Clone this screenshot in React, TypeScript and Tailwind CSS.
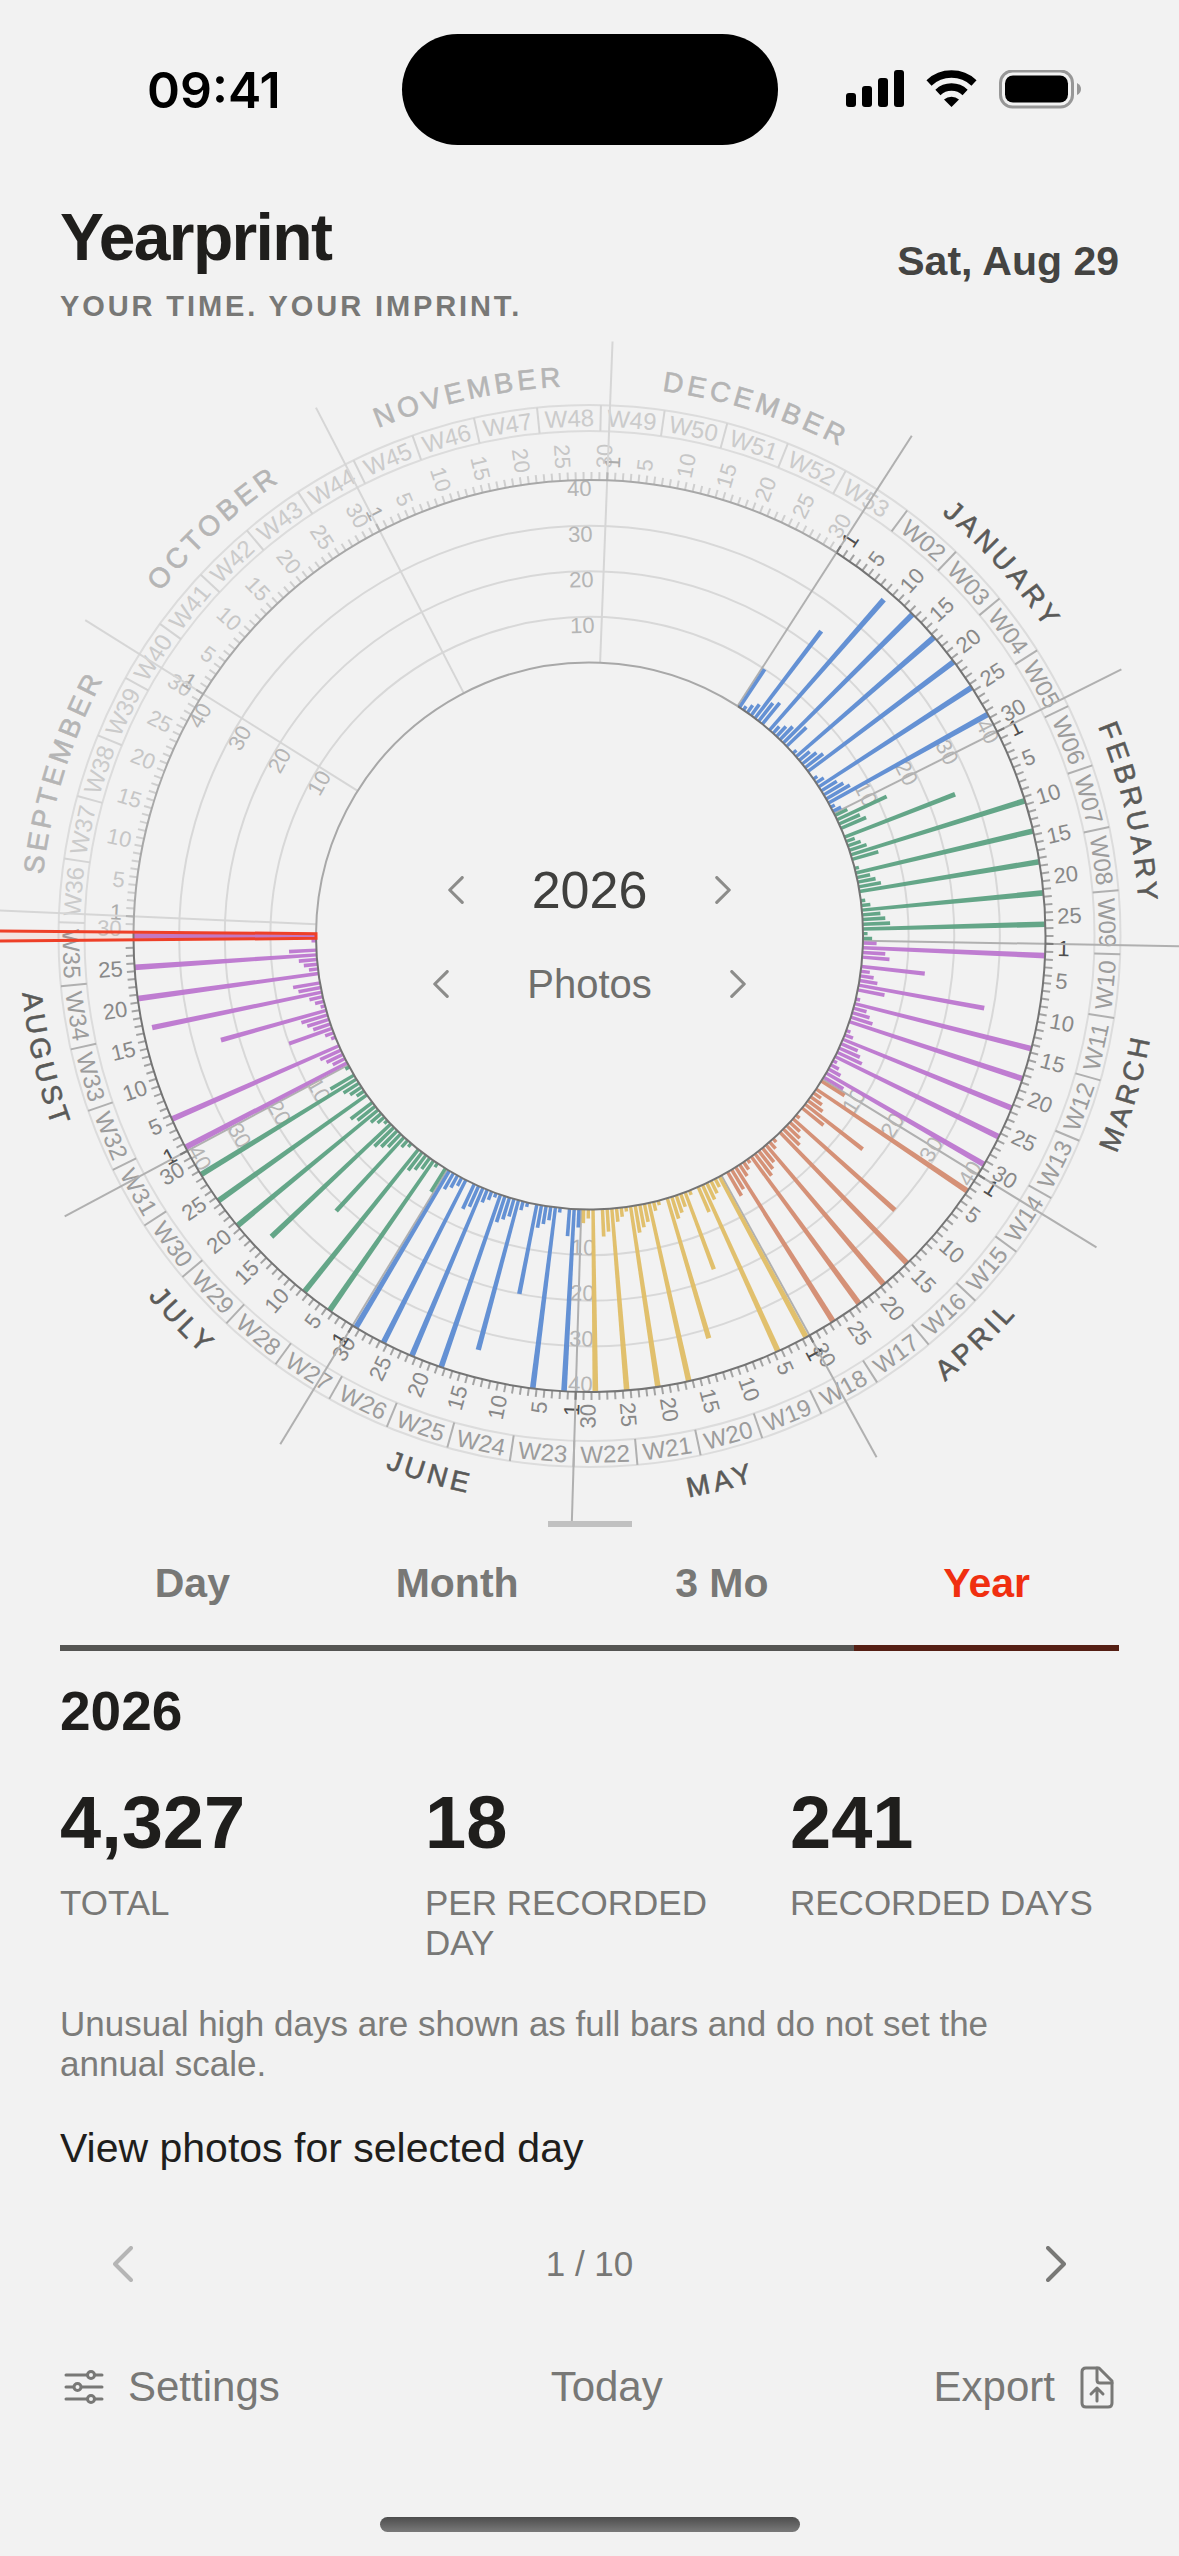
const CX = 589.5;
const CY = 595;
const R_OUT = 456;
const R_IN = 273.5;
const R_WEEK_IN = 505;
const R_WEEK_OUT = 531;
const R_LINE = 595;

const DAYS = 365;
const TODAY = 240;
const STEP = 360 / DAYS;
// today always sits at nine o'clock
const START = 270 - (TODAY + 0.5) * STEP;

const MONTHS = [
  { name: "JANUARY", days: 31, color: "#5f8dd3" },
  { name: "FEBRUARY", days: 28, color: "#5fa384" },
  { name: "MARCH", days: 31, color: "#bd79cf" },
  { name: "APRIL", days: 30, color: "#d48d73" },
  { name: "MAY", days: 31, color: "#e0be68" },
  { name: "JUNE", days: 30, color: "#5f8dd3" },
  { name: "JULY", days: 31, color: "#5fa384" },
  { name: "AUGUST", days: 31, color: "#bd79cf" },
  { name: "SEPTEMBER", days: 30, color: "#d48d73" },
  { name: "OCTOBER", days: 31, color: "#e0be68" },
  { name: "NOVEMBER", days: 30, color: "#5f8dd3" },
  { name: "DECEMBER", days: 31, color: "#5fa384" },
];

const months = MONTHS.map((month, i) => ({
  ...month,
  start: MONTHS.slice(0, i).reduce((sum, m) => sum + m.days, 0),
}));

const photoCount = (day: number) => (day % 4 === 0 ? 10 + ((day * 3.5) % 110) : day % 7);

const angleOf = (day: number) => START + day * STEP;

function point(angle: number, r: number) {
  const rad = (angle * Math.PI) / 180;
  return { x: CX + r * Math.sin(rad), y: CY - r * Math.cos(rad) };
}

function xy(angle: number, r: number) {
  const p = point(angle, r);
  return `${p.x.toFixed(2)} ${p.y.toFixed(2)}`;
}

const norm = (angle: number) => ((angle % 360) + 360) % 360;
const isLower = (angle: number) => norm(angle) > 90 && norm(angle) < 270;

function wedge(center: number, half: number, r0: number, r1: number) {
  return `M${xy(center - half, r0)} L${xy(center - half, r1)} L${xy(center + half, r1)} L${xy(center + half, r0)} Z`;
}

function arc(from: number, to: number, r: number) {
  const large = Math.abs(to - from) > 180 ? 1 : 0;
  const sweep = to > from ? 1 : 0;
  return `M${xy(from, r)} A${r} ${r} 0 ${large} ${sweep} ${xy(to, r)}`;
}

function Spoke({ angle, r0, r1, color, width = 2 }: { angle: number; r0: number; r1: number; color: string; width?: number }) {
  const a = point(angle, r0);
  const b = point(angle, r1);
  return <line x1={a.x} y1={a.y} x2={b.x} y2={b.y} stroke={color} strokeWidth={width} />;
}

// text that follows the circle, kept readable in the lower half
function TangentText({ angle, r, size, color, children }: { angle: number; r: number; size: number; color: string; children: string | number }) {
  const p = point(angle, r);
  const turn = isLower(angle) ? angle + 180 : angle;
  return (
    <text transform={`translate(${p.x} ${p.y}) rotate(${turn})`} y={size * 0.36} fontSize={size} fill={color} textAnchor="middle">
      {children}
    </text>
  );
}

// text that points away from the centre
function RadialText({ angle, color, children }: { angle: number; color: string; children: number }) {
  const p = point(angle, 468);
  const left = norm(angle) > 180;
  return (
    <text
      transform={`translate(${p.x} ${p.y}) rotate(${left ? angle + 90 : angle - 90})`}
      y={8}
      fontSize={22}
      fill={color}
      textAnchor={left ? "end" : "start"}
    >
      {children}
    </text>
  );
}

function YearDial() {
  const days = Array.from({ length: DAYS }, (_, day) => day);
  const weeks = Array.from({ length: 52 }, (_, i) => ({ label: `W${String(i + 2).padStart(2, "0")}`, start: 4 + i * 7 }));
  const todayEnd = angleOf(TODAY + 1);

  return (
    <svg viewBox="0 0 1179 1192" className="block w-full" role="img" aria-label="Photos per day in 2026">
      {[10, 20, 30].map((value) => (
        <circle key={value} cx={CX} cy={CY} r={R_IN + ((R_OUT - R_IN) * value) / 40} fill="none" stroke="#d8d8d8" strokeWidth={2} />
      ))}
      <circle cx={CX} cy={CY} r={R_WEEK_IN} fill="none" stroke="#dcdcdc" strokeWidth={2} />
      <circle cx={CX} cy={CY} r={R_WEEK_OUT} fill="none" stroke="#dcdcdc" strokeWidth={2} />

      {days.map((day) => (
        <Spoke key={day} angle={angleOf(day)} r0={R_OUT} r1={R_OUT + 8} color={day <= TODAY ? "#a3a3a3" : "#cfcfcf"} />
      ))}

      {weeks.map((week) => {
        const past = week.start <= TODAY;
        return (
          <g key={week.label}>
            <Spoke angle={angleOf(week.start)} r0={R_WEEK_IN} r1={R_WEEK_OUT} color={past ? "#b0b0b0" : "#d4d4d4"} />
            <TangentText angle={angleOf(week.start + 3.5)} r={518} size={24} color={past ? "#9c9c9c" : "#cbcbcb"}>
              {week.label}
            </TangentText>
          </g>
        );
      })}

      {months.map((month) =>
        [1, 5, 10, 15, 20, 25, 30]
          .filter((date) => date <= month.days)
          .map((date) => {
            const day = month.start + date - 1;
            const past = day <= TODAY;
            const color = date === 1 ? (past ? "#4f4f4f" : "#ababab") : past ? "#888888" : "#c6c6c6";
            return (
              <RadialText key={`${month.name}-${date}`} angle={angleOf(day + 0.5)} color={color}>
                {date}
              </RadialText>
            );
          }),
      )}

      {months.map((month) => {
        const past = month.start <= TODAY;
        return (
          <g key={month.name}>
            <Spoke angle={angleOf(month.start)} r0={R_IN} r1={R_LINE} color={past ? "#b0b0b0" : "#d6d6d6"} />
            <Spoke angle={angleOf(month.start)} r0={R_OUT} r1={R_OUT + 8} color={past ? "#7c7c7c" : "#b5b5b5"} />
          </g>
        );
      })}

      {[0, 1, 2, 3, 4, 5].map((i) =>
        [10, 20, 30, 40].map((value) => (
          <TangentText
            key={`${i}-${value}`}
            angle={62.8 + i * 60 * STEP}
            r={R_IN + ((R_OUT - R_IN) * value) / 40 - 8}
            size={22}
            color="#b5b5b5"
          >
            {value}
          </TangentText>
        )),
      )}

      {months.map((month) => (
        <g key={month.name} fill={month.color} fillOpacity={0.97}>
          {days
            .filter((day) => day >= month.start && day < month.start + month.days && day <= TODAY && photoCount(day) > 0)
            .map((day) => (
              <path
                key={day}
                d={wedge(angleOf(day + 0.5), STEP * 0.36, R_IN, R_IN + ((R_OUT - R_IN) * Math.min(photoCount(day), 40)) / 40)}
              />
            ))}
        </g>
      ))}

      {[R_IN, R_OUT].map((r) => (
        <g key={r} fill="none" strokeWidth={2}>
          <path d={arc(START, todayEnd, r)} stroke="#747474" />
          <path d={arc(todayEnd, START + 360, r)} stroke="#a8a8a8" />
        </g>
      ))}

      {months.map((month) => {
        const mid = angleOf(month.start + month.days / 2);
        const lower = isLower(mid);
        const id = `arc-${month.name.toLowerCase()}`;
        const color = month.start <= TODAY ? "#5a5a58" : "#b5b5b5";
        return (
          <g key={month.name}>
            <path id={id} d={lower ? arc(mid + 20, mid - 20, 570) : arc(mid - 20, mid + 20, 550)} fill="none" />
            <text fontSize={28} fill={color} stroke={color} strokeWidth={0.6} textAnchor="middle" letterSpacing={4}>
              <textPath href={`#${id}`} startOffset="50%">
                {month.name}
              </textPath>
            </text>
          </g>
        );
      })}

      <path
        d={wedge(270, STEP / 2, R_IN, 620)}
        fill="#ee3a20"
        fillOpacity={0.08}
        stroke="#ee4028"
        strokeWidth={3}
      />
      <rect x={548} y={1180} width={84} height={6} fill="#c1c1c1" />
      <rect x={548} y={1186} width={84} height={6} fill="#f2f2f2" />
    </svg>
  );
}

function Chevron({ direction, className }: { direction: "left" | "right"; className: string }) {
  return (
    <svg viewBox="0 0 20 36" className={className} fill="none" stroke="currentColor" strokeWidth={4} strokeLinecap="round" strokeLinejoin="round" aria-hidden="true">
      <path d={direction === "left" ? "M18 2 L2 18 L18 34" : "M2 2 L18 18 L2 34"} />
    </svg>
  );
}

function Stepper({ label, what, className, gap }: { label: string; what: string; className: string; gap: string }) {
  return (
    <div className={`flex items-center justify-center ${gap}`}>
      <button type="button" aria-label={`Previous ${what}`} className="p-4 text-[#8c8c8a]">
        <Chevron direction="left" className="h-7 w-4" />
      </button>
      <span className={className}>{label}</span>
      <button type="button" aria-label={`Next ${what}`} className="p-4 text-[#8c8c8a]">
        <Chevron direction="right" className="h-7 w-4" />
      </button>
    </div>
  );
}

function StatusBar() {
  return (
    <div className="grid grid-cols-3 items-center pt-[34px] text-black">
      <span className="pl-[147px] font-[Inter,sans-serif] text-[50px] leading-none font-semibold">09:41</span>
      <div className="h-[111px] w-[376px] justify-self-center rounded-full bg-black" />
      <svg viewBox="0 0 236 40" className="mr-[97px] h-10 w-[236px] justify-self-end" aria-label="Signal, Wi-Fi and battery" role="img">
        <rect x="0" y="23" width="10" height="14" rx="3" />
        <rect x="16" y="16" width="10" height="21" rx="3" />
        <rect x="32" y="8" width="10" height="29" rx="3" />
        <rect x="48" y="0" width="10" height="37" rx="3" />
        <g fill="none" stroke="#000" strokeWidth="7.5">
          <path d="M83 12.900 A33 33 0 0 1 128 12.900" />
          <path d="M91.900 22.400 A20 20 0 0 1 119.100 22.400" />
        </g>
        <path d="M98 29.500 A11.500 11.500 0 0 1 113 29.500 L105.500 37 Z" />
        <rect x="154.500" y="1" width="72" height="36" rx="12" fill="none" stroke="#979797" strokeWidth="3" />
        <rect x="159" y="5.500" width="63" height="27" rx="8" />
        <path d="M231 13 Q235 15 235 19 Q235 23 231 25 Z" fill="#979797" />
      </svg>
    </div>
  );
}

const TABS = ["Day", "Month", "3 Mo", "Year"];

const STATS = [
  { value: "4,327", label: "TOTAL" },
  { value: "18", label: "PER RECORDED DAY" },
  { value: "241", label: "RECORDED DAYS" },
];

export default function App() {
  return (
    <main className="flex min-h-screen flex-col bg-[#f2f2f2] font-['Liberation_Sans',Arial,sans-serif] text-[#1f1e1c]">
      <StatusBar />

      <header className="flex items-start justify-between px-[60px] pt-[56px]">
        <div>
          <h1 className="text-[66px] leading-[72px] font-bold tracking-tight">Yearprint</h1>
          <p className="pt-[15px] text-[29px] leading-[36px] font-bold tracking-widest text-[#787876]">YOUR TIME. YOUR IMPRINT.</p>
        </div>
        <time dateTime="2026-08-29" className="pt-[36px] text-[41px] leading-[48px] font-bold text-[#444442]">
          Sat, Aug 29
        </time>
      </header>

      <section className="relative mt-[17px]">
        <YearDial />
        <div className="absolute inset-0 flex flex-col items-center justify-center gap-[34px]">
          <Stepper label="2026" what="year" gap="gap-[52px]" className="text-[52px] leading-[60px] text-[#40403e]" />
          <Stepper label="Photos" what="category" gap="gap-[62px]" className="text-[40px] leading-[60px] text-[#6f6f6d]" />
        </div>
      </section>

      <nav className="mx-[60px] grid grid-cols-4">
        {TABS.map((tab) => (
          <button
            key={tab}
            type="button"
            aria-pressed={tab === "Year"}
            className={
              tab === "Year"
                ? "border-b-[6px] border-[#551f14] pt-[26px] pb-[38px] text-[41px] leading-[48px] font-bold text-[#f02f10]"
                : "border-b-[6px] border-[#555553] pt-[26px] pb-[38px] text-[41px] leading-[48px] font-bold text-[#787876]"
            }
          >
            {tab}
          </button>
        ))}
      </nav>

      <section className="px-[60px] pt-[28px]">
        <h2 className="text-[55px] leading-[64px] font-bold">2026</h2>
        <dl className="grid grid-cols-3 gap-9 pt-[40px]">
          {STATS.map((stat) => (
            <div key={stat.label} className="flex flex-col-reverse justify-end">
              <dt className="pt-[20px] text-[35px] leading-[40px] text-[#787876]">{stat.label}</dt>
              <dd className="text-[74px] leading-[80px] font-bold">{stat.value}</dd>
            </div>
          ))}
        </dl>
        <p className="pt-[41px] pr-12 text-[35px] leading-[40px] text-[#7c7c7a]">
          Unusual high days are shown as full bars and do not set the annual scale.
        </p>
        <button type="button" className="pt-[36px] text-left text-[41px] leading-[56px]">
          View photos for selected day
        </button>
      </section>

      <div className="flex items-center justify-between px-[97px] pt-[66px] text-[#787876]">
        <button type="button" aria-label="Previous page" disabled className="px-4 text-[#b5b5b5]">
          <Chevron direction="left" className="h-9 w-5" />
        </button>
        <span className="text-[35px] leading-[44px]">1 / 10</span>
        <button type="button" aria-label="Next page" className="px-4">
          <Chevron direction="right" className="h-9 w-5" />
        </button>
      </div>

      <footer className="flex items-center justify-between px-[60px] pt-[73px] text-[42px] leading-[56px] text-[#787876]">
        <button type="button" className="flex items-center gap-5">
          <svg viewBox="0 0 48 48" className="size-12" fill="none" stroke="currentColor" strokeWidth="3" strokeLinecap="round" aria-hidden="true">
            <path d="M6 12 H27 M35 12 H42 M6 24 H13 M22 24 H42 M6 36 H27 M35 36 H42" />
            <circle cx="31" cy="12" r="3.500" />
            <circle cx="17.500" cy="24" r="3.500" />
            <circle cx="31" cy="36" r="3.500" />
          </svg>
          Settings
        </button>
        <button type="button">Today</button>
        <button type="button" className="flex items-center gap-5">
          Export
          <svg viewBox="0 0 44 48" className="h-12 w-11" fill="none" stroke="currentColor" strokeWidth="3" strokeLinecap="round" strokeLinejoin="round" aria-hidden="true">
            <path d="M11 5 H24 L37 18 V40 Q37 44 33 44 H11 Q7 44 7 40 V9 Q7 5 11 5 Z" />
            <path d="M22 5 V17 Q22 20 25 20 H37" />
            <path d="M22 38 V25 M16 31 L22 25 L28 31" />
          </svg>
        </button>
      </footer>

      <div className="mx-auto mt-auto mb-6 h-[15px] w-[420px] rounded-full bg-linear-to-b from-[#4d4d4d] to-[#7a7a7a]" />
    </main>
  );
}
